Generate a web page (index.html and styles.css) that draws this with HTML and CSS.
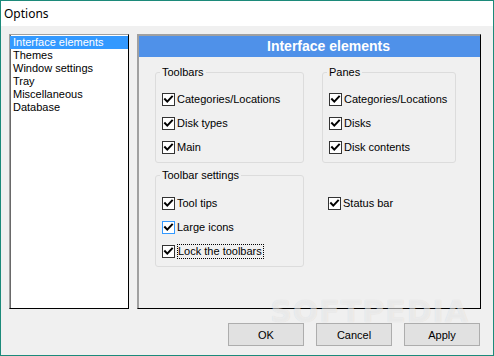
FILE: index.html
```html
<!DOCTYPE html>
<html lang="en">
<head>
  <meta charset="UTF-8">
  <title>Options</title>
  <link rel="stylesheet" href="styles.css">
</head>
<body>
  <div class="window">
    <div class="titlebar">Options</div>

    <div class="client">
      <div class="main">
        <ul class="list">
          <li class="selected">Interface elements</li>
          <li>Themes</li>
          <li>Window settings</li>
          <li>Tray</li>
          <li>Miscellaneous</li>
          <li>Database</li>
        </ul>

        <div class="panel">
          <div class="panel-head">Interface elements</div>
          <div class="groups">
            <fieldset class="group">
              <legend>Toolbars</legend>
              <label class="check"><span class="box"><svg viewBox="0 0 11 11"><path d="M2 5.2 L4.3 7.6 L9 2.6"/></svg></span>Categories/Locations</label>
              <label class="check"><span class="box"><svg viewBox="0 0 11 11"><path d="M2 5.2 L4.3 7.6 L9 2.6"/></svg></span>Disk types</label>
              <label class="check"><span class="box"><svg viewBox="0 0 11 11"><path d="M2 5.2 L4.3 7.6 L9 2.6"/></svg></span>Main</label>
            </fieldset>

            <fieldset class="group">
              <legend>Panes</legend>
              <label class="check"><span class="box"><svg viewBox="0 0 11 11"><path d="M2 5.2 L4.3 7.6 L9 2.6"/></svg></span>Categories/Locations</label>
              <label class="check"><span class="box"><svg viewBox="0 0 11 11"><path d="M2 5.2 L4.3 7.6 L9 2.6"/></svg></span>Disks</label>
              <label class="check"><span class="box"><svg viewBox="0 0 11 11"><path d="M2 5.2 L4.3 7.6 L9 2.6"/></svg></span>Disk contents</label>
            </fieldset>

            <fieldset class="group">
              <legend>Toolbar settings</legend>
              <label class="check"><span class="box"><svg viewBox="0 0 11 11"><path d="M2 5.2 L4.3 7.6 L9 2.6"/></svg></span>Tool tips</label>
              <label class="check"><span class="box hover"><svg viewBox="0 0 11 11"><path d="M2 5.2 L4.3 7.6 L9 2.6"/></svg></span>Large icons</label>
              <label class="check"><span class="box"><svg viewBox="0 0 11 11"><path d="M2 5.2 L4.3 7.6 L9 2.6"/></svg></span><span class="focus">Lock the toolbars</span></label>
            </fieldset>

            <div class="loose">
              <label class="check"><span class="box"><svg viewBox="0 0 11 11"><path d="M2 5.2 L4.3 7.6 L9 2.6"/></svg></span>Status bar</label>
            </div>
          </div>
        </div>
      </div>

      <div class="buttons">
        <button>OK</button>
        <button>Cancel</button>
        <button>Apply</button>
      </div>
    </div>

    <div class="watermark">SOFTPEDIA</div>
  </div>
</body>
</html>
```

FILE: styles.css
```css
* { box-sizing: border-box; }
body {
  margin: 0;
  background: #fff;
  font-family: "Liberation Sans", Arial, sans-serif;
  font-size: 11px;
  color: #000;
}
.window {
  position: relative;
  width: 494px;
  height: 356px;
  border: 1px solid #1c8a7a;
  background: #f0f0f0;
  overflow: hidden;
}
.titlebar {
  height: 25px;
  line-height: 25px;
  padding-left: 3px;
  background: #fff;
  font-family: "Noto Sans", "Liberation Sans", sans-serif;
  font-size: 12px;
}
.client { padding: 8px 12px 0 8px; }
.main {
  display: flex;
  gap: 8px;
  height: 275px;
}

/* left list */
.list {
  width: 120px;
  margin: 0;
  padding: 1px 0 0;
  list-style: none;
  background: #fff;
  border: 1px solid;
  border-color: #a0a0a0 #000 #000 #a0a0a0;
  box-shadow: inset 1px 0 #696969;
}
.list li {
  height: 13px;
  line-height: 13px;
  padding: 0 3px;
}
.list li.selected { background: #3399ff; color: #fff; }

/* right panel */
.panel {
  width: 344px;
  border: 1px solid;
  border-color: #a0a0a0 #000 #000 #a0a0a0;
  box-shadow: inset 1px 1px #a0a0a0;
}
.panel-head {
  margin: 1px 0 0 1px;
  height: 21px;
  line-height: 21px;
  padding-left: 38px;
  background: #4f91e9;
  color: #fff;
  font-weight: bold;
  font-size: 14px;
  text-align: center;
}
.groups {
  display: grid;
  grid-template-columns: 149px 134px;
  column-gap: 18px;
  row-gap: 6px;
  padding: 9px 0 0 17px;
}
.group {
  margin: 0;
  padding: 8px 6px 3px;
  border: 1px solid #dcdcdc;
  border-radius: 3px;
  min-width: 0;
}
.group + .group + .group { padding-top: 9px; }
.group legend {
  padding: 0 2px;
  margin-left: -2px;
  line-height: 13px;
}
.loose { padding: 22px 0 0 6px; }

.check {
  display: flex;
  align-items: center;
  height: 24px;
  white-space: nowrap;
}
.box {
  width: 13px;
  height: 13px;
  margin-right: 2px;
  border: 1px solid #333;
  background: #fff;
  flex: none;
  display: flex;
}
.box.hover { border-color: #3399ff; }
.box svg { width: 11px; height: 11px; }
.box path {
  fill: none;
  stroke: #000;
  stroke-width: 2;
  stroke-linecap: square;
}
.focus {
  border: 1px dotted #000;
  line-height: 13px;
  padding: 0 1px 0 0;
}

/* dialog buttons */
.buttons {
  display: flex;
  justify-content: flex-end;
  gap: 12px;
  margin-top: 14px;
  padding-right: 1px;
}
.buttons button {
  width: 76px;
  height: 23px;
  background: #e1e1e1;
  border: 1px solid #adadad;
  font-family: "Liberation Sans", Arial, sans-serif;
  font-size: 11px;
  color: #000;
  padding: 0;
}

.watermark {
  position: absolute;
  right: 24px;
  bottom: 29px;
  font-family: "DejaVu Sans", sans-serif;
  font-weight: bold;
  font-size: 30px;
  line-height: 28px;
  letter-spacing: 1px;
  color: rgba(255, 255, 255, 0.55);
  text-shadow: 0 0 1px rgba(0, 0, 0, 0.12);
  pointer-events: none;
}
```
